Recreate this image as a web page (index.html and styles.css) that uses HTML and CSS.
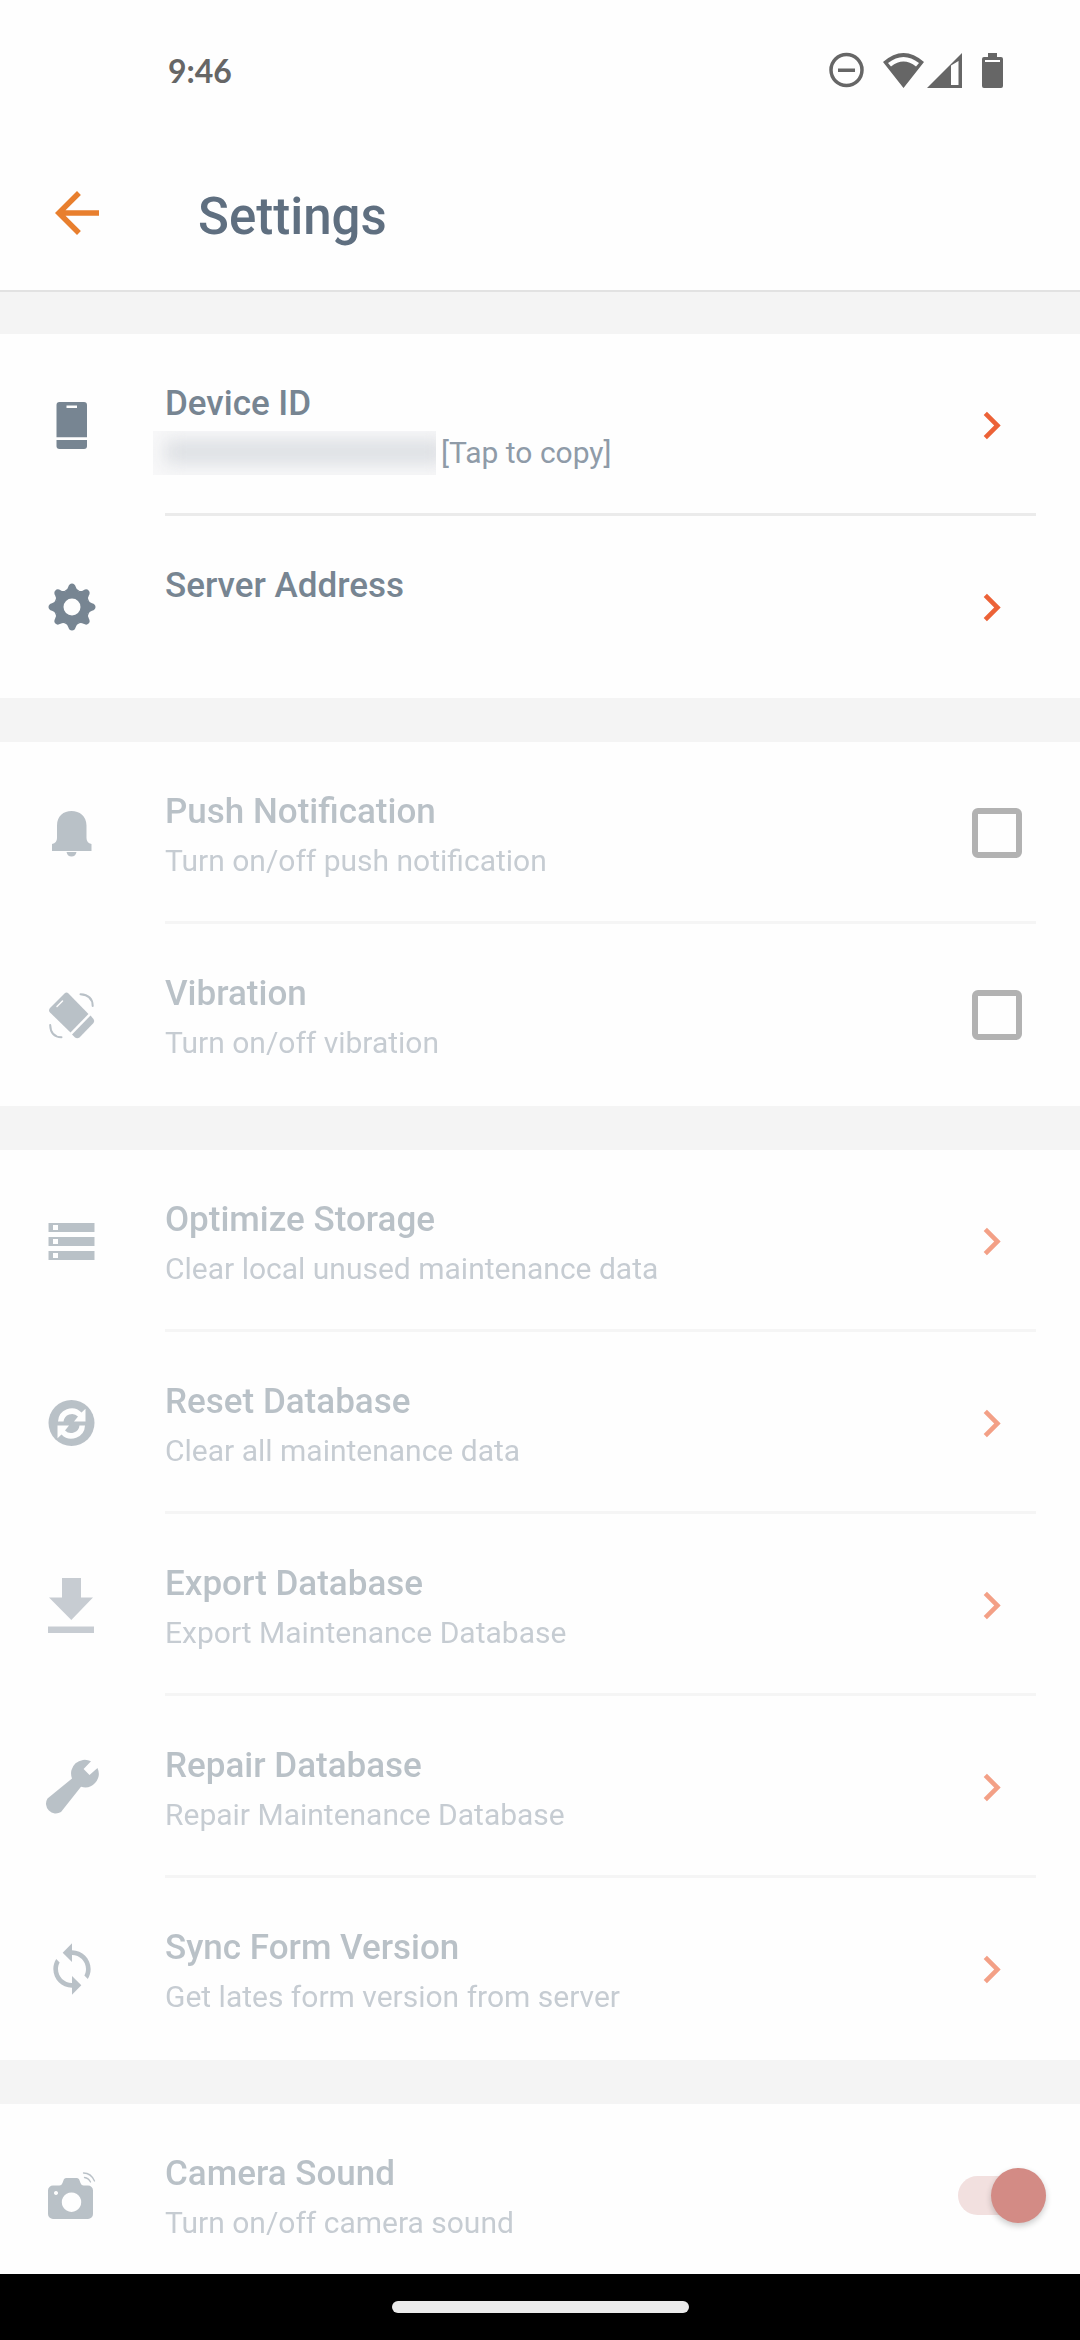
FILE: index.html
```
<!DOCTYPE html>
<html lang="en">
<head>
  <meta charset="UTF-8">
  <meta name="viewport" content="width=device-width, initial-scale=1.0">
  <title>Settings</title>
  <link rel="stylesheet" href="styles.css">
</head>
<body>
  <!-- shared chevron -->
  <svg class="defs" aria-hidden="true">
    <symbol id="chevron" viewBox="0 0 24 24"><path d="M10 6 8.590 7.410 13.170 12l-4.580 4.590L10 18l6-6z"/></symbol>
  </svg>

  <div class="status-bar">
    <span class="time">9:46</span>
    <svg class="status-icons" viewBox="0 0 176 36" aria-hidden="true">
      <circle cx="17.500" cy="18" r="15.500" fill="none" stroke="#666" stroke-width="3.500"/>
      <path d="M9 16.500h17v3.500H9z"/>
      <path fill-rule="evenodd" d="M54 10Q74.500-8 95 10L74.500 36zM59 11L62 14.500Q74.500 4.500 87 14.500L90 11Q74.500-1 59 11z"/>
      <path fill-rule="evenodd" d="M98 36L133 1V36zM122 13.500V33H129.500V9z" />
      <path fill-rule="evenodd" d="M159 1h9v4h4a2 2 0 0 1 2 2v27a2 2 0 0 1-2 2h-17a2 2 0 0 1-2-2V7a2 2 0 0 1 2-2h4zM156 8v2h15V8z"/>
    </svg>
  </div>

  <header class="app-bar">
    <button class="back" aria-label="Back">
      <svg viewBox="0 0 24 24"><path d="M20 11H7.830l5.590-5.590L12 4l-8 8 8 8 1.410-1.410L7.830 13H20v-2z"/></svg>
    </button>
    <h1>Settings</h1>
  </header>

  <main>
    <section class="group">
      <button class="row">
        <svg class="icon" viewBox="0 0 56 56">
          <path fill-rule="evenodd" d="M15.500 5h24.500a3 3 0 0 1 3 3v32.300H12.500V8a3 3 0 0 1 3-3zM22.500 8.500v2.500h10.500V8.500z"/>
          <path d="M12.500 43H43v6a3 3 0 0 1-3 3H15.500a3 3 0 0 1-3-3z"/>
        </svg>
        <span class="body">
          <span class="text">
            <span class="title">Device ID</span>
            <span class="desc"><span class="redacted"></span>[Tap to copy]</span>
          </span>
          <svg class="chevron"><use href="#chevron"/></svg>
        </span>
      </button>
      <button class="row">
        <svg class="icon" viewBox="0 0 56 56">
          <g transform="translate(28 28)">
            <path id="tooth" d="M-7-16.500Q-4.500-17-3.800-20Q-2.800-23.500 0-23.500Q2.800-23.500 3.800-20Q4.500-17 7-16.500L0 0z"/>
            <use href="#tooth" transform="rotate(45)"/>
            <use href="#tooth" transform="rotate(90)"/>
            <use href="#tooth" transform="rotate(135)"/>
            <use href="#tooth" transform="rotate(180)"/>
            <use href="#tooth" transform="rotate(225)"/>
            <use href="#tooth" transform="rotate(270)"/>
            <use href="#tooth" transform="rotate(315)"/>
            <circle r="12.500" fill="none" stroke="#778592" stroke-width="8"/>
            <circle r="8.500" fill="#fefefe"/>
          </g>
        </svg>
        <span class="body">
          <span class="text">
            <span class="title">Server Address</span>
            <span class="desc"></span>
          </span>
          <svg class="chevron"><use href="#chevron"/></svg>
        </span>
      </button>
    </section>

    <section class="group">
      <label class="row disabled">
        <svg class="icon" viewBox="0 0 56 56">
          <path d="M13 20.500C13 11 19.500 6 27.500 6S42.500 11 42.500 20.500V33q0 5 5 6v7H8v-7q5-1 5-6z"/>
          <path d="M22.500 47h10q-1 4.500-5 4.500t-5-4.500z"/>
        </svg>
        <span class="body">
          <span class="text">
            <span class="title">Push Notification</span>
            <span class="desc">Turn on/off push notification</span>
          </span>
          <input type="checkbox" class="check" disabled>
        </span>
      </label>
      <label class="row disabled">
        <svg class="icon" viewBox="0 0 56 56">
          <path d="M20.500 6.500Q22.500 4.500 24.500 6.500L44.500 27 26.500 45.500 6 25.500Q4 23.500 6 21z"/>
          <path d="M46.500 28.500L49.500 32Q51 34 49.500 36L35.500 50.500Q33 52 31 50.500L28 47.500z"/>
          <path d="M13 19.500L18.500 14" fill="none" stroke="#fefefe" stroke-width="1.500" stroke-linecap="round"/>
          <path d="M36.500 7.300Q48.500 8 48.700 19M6.200 38Q6.500 50 17.500 50.300" fill="none" stroke="#778592" stroke-width="2" stroke-linecap="round"/>
        </svg>
        <span class="body">
          <span class="text">
            <span class="title">Vibration</span>
            <span class="desc">Turn on/off vibration</span>
          </span>
          <input type="checkbox" class="check" disabled>
        </span>
      </label>
    </section>

    <section class="group">
      <button class="row disabled" disabled>
        <svg class="icon" viewBox="0 0 56 56">
          <path fill-rule="evenodd" d="M4.500 10h46v9h-46zM9 12v5h5v-5zM4.500 24h46v9h-46zM9 26v5h5v-5zM4.500 38h46v9h-46zM9 40v5h5v-5z"/>
        </svg>
        <span class="body">
          <span class="text">
            <span class="title">Optimize Storage</span>
            <span class="desc">Clear local unused maintenance data</span>
          </span>
          <svg class="chevron"><use href="#chevron"/></svg>
        </span>
      </button>
      <button class="row disabled" disabled>
        <svg class="icon" viewBox="0 0 56 56">
          <circle cx="27.500" cy="28" r="23"/>
          <path id="turn" fill="#fefefe" d="M14 26.500A13.700 13.700 0 0 1 37.500 17.500L41.500 13.700V26.500H30L34 21.500A8.500 8.500 0 0 0 19.500 26.500z"/>
          <use href="#turn" transform="rotate(180 27.500 28.500)"/>
        </svg>
        <span class="body">
          <span class="text">
            <span class="title">Reset Database</span>
            <span class="desc">Clear all maintenance data</span>
          </span>
          <svg class="chevron"><use href="#chevron"/></svg>
        </span>
      </button>
      <button class="row disabled" disabled>
        <svg class="icon light" viewBox="0 0 56 56">
          <path d="M18 1h19v19.500h12L27.300 43 5 20.500h13zM4 49.500h46v6.500H4z"/>
        </svg>
        <span class="body">
          <span class="text">
            <span class="title">Export Database</span>
            <span class="desc">Export Maintenance Database</span>
          </span>
          <svg class="chevron"><use href="#chevron"/></svg>
        </span>
      </button>
      <button class="row disabled" disabled>
        <svg class="icon" viewBox="0 0 56 56">
          <path d="M28 19.500L3.500 39.500A9.800 9.800 0 0 0 17 53L37 27.700A13.700 13.700 0 0 0 53.500 9L45.500 16 39.600 10 47 2.300A13.700 13.700 0 0 0 28 19.500z"/>
        </svg>
        <span class="body">
          <span class="text">
            <span class="title">Repair Database</span>
            <span class="desc">Repair Maintenance Database</span>
          </span>
          <svg class="chevron"><use href="#chevron"/></svg>
        </span>
      </button>
      <button class="row disabled" disabled>
        <svg class="icon" viewBox="0 0 24 24">
          <path d="M12 4V1L8 5l4 4V6c3.310 0 6 2.690 6 6 0 1.010-.25 1.970-.7 2.800l1.460 1.460C19.540 15.030 20 13.570 20 12c0-4.420-3.580-8-8-8zm0 14c-3.310 0-6-2.690-6-6 0-1.010.25-1.970.7-2.800L5.240 7.740C4.460 8.970 4 10.430 4 12c0 4.420 3.580 8 8 8v3l4-4-4-4v3z"/>
        </svg>
        <span class="body">
          <span class="text">
            <span class="title">Sync Form Version</span>
            <span class="desc">Get lates form version from server</span>
          </span>
          <svg class="chevron"><use href="#chevron"/></svg>
        </span>
      </button>
    </section>

    <section class="group">
      <label class="row disabled">
        <svg class="icon" viewBox="0 0 56 56">
          <path fill-rule="evenodd" d="M9 18.500h6.500q2 0 3-2.500l1.300-3.500Q20.500 11 22 11h11q1.500 0 2.200 1.500L36.500 16q1 2.500 3 2.500H44a5 5 0 0 1 5 5V47a5 5 0 0 1-5 5H9a5 5 0 0 1-5-5V23.500a5 5 0 0 1 5-5zM27.500 25.500a9.700 9.700 0 1 0 .01 0zM12 24a2 2 0 1 0 .01 0z"/>
          <path d="M39.500 6Q47 6 50.500 14M40.500 10.500Q44.500 11 46.500 15" fill="none" stroke="#778592" stroke-width="1.300" stroke-linecap="round"/>
        </svg>
        <span class="body">
          <span class="text">
            <span class="title">Camera Sound</span>
            <span class="desc">Turn on/off camera sound</span>
          </span>
          <input type="checkbox" class="switch" checked disabled>
        </span>
      </label>
    </section>
  </main>

  <div class="nav-bar"><span class="pill"></span></div>
</body>
</html>
```
FILE: styles.css
```
* { box-sizing: border-box; }
body {
  display: flex;
  flex-direction: column;
  height: 100vh;
  margin: 0;
  font-family: Roboto, sans-serif;
  background-color: #fefefe;
}
button {
  padding: 0;
  border: none;
  background: none;
  font: inherit;
  text-align: left;
}
svg { display: block; }
.defs { display: none; }

.status-bar {
  flex: none;
  display: flex;
  align-items: center;
  justify-content: space-between;
  height: 140px;
  padding: 0 75px 0 168px;
}
.time {
  font-family: Lato, sans-serif;
  font-size: 32px;
  font-weight: 700;
  color: #666;
}
.status-icons { width: 176px; height: 36px; fill: #666; }

.app-bar {
  flex: none;
  display: flex;
  align-items: center;
  gap: 88px;
  height: 152px;
  padding: 0 44px 4px;
  border-bottom: 2px solid #e2e2e2;
}
.back svg { width: 66px; height: 66px; fill: #e87f2e; }
h1 {
  margin: 0;
  padding-top: 6px;
  font-size: 51px;
  font-weight: 500;
  color: #5f6f80;
}

main {
  flex: 1;
  min-height: 0;
  display: flex;
  flex-direction: column;
  gap: 44px;
  padding-top: 42px;
  overflow-y: auto;
  scrollbar-width: none;
  background-color: #f4f4f4;
}
.group { background-color: #fefefe; }
.row {
  display: flex;
  align-items: center;
  gap: 65px;
  width: 100%;
  height: 182px;
  padding: 0 44px;
}
.icon { flex: none; width: 56px; height: 56px; fill: #778592; }
.icon.light { fill: #919ca8; }
.body {
  flex: 1;
  display: flex;
  align-items: center;
  justify-content: space-between;
  height: 182px;
  padding-right: 17px;
  border-top: 3px solid transparent;
  border-bottom: 3px solid #ebebeb;
}
.row:last-child .body { border-bottom-color: transparent; }
.text { padding-top: 6px; }
.title, .desc { display: block; height: 48px; line-height: 48px; }
.title {
  font-size: 35px;
  font-weight: 500;
  color: #778592;
}
.desc {
  display: flex;
  align-items: center;
  margin-top: 1px;
  font-size: 30px;
  color: #8f9ba8;
}
.chevron { width: 55px; height: 55px; fill: #ec6237; }

/* greyed out until a server address is set */
.disabled .icon, .disabled .text { opacity: 0.5; }
.disabled .chevron { opacity: 0.6; }
.disabled .body { border-bottom-color: #f5f5f5; }

.redacted {
  width: 283px;
  height: 44px;
  margin: 0 5px 0 -12px;
  overflow: hidden;
  background-color: #f8f8f9;
}
.redacted::before {
  content: "";
  display: block;
  height: 24px;
  margin: 9px -10px 0 12px;
  background-color: #dcdfe3;
  filter: blur(9px);
}

.check {
  appearance: none;
  width: 50px;
  height: 50px;
  margin: 0 -3px 0 0;
  border: 6px solid #b2b2b2;
  border-radius: 6px;
}
.switch {
  appearance: none;
  display: flex;
  align-items: center;
  justify-content: flex-end;
  width: 88px;
  height: 39px;
  margin: 0 -27px 0 0;
  border-radius: 20px;
  background-color: #f2e0df;
}
.switch::before {
  content: "";
  flex: none;
  width: 55px;
  height: 55px;
  border-radius: 50%;
  background-color: #d38b85;
  box-shadow: 0 3px 6px rgba(0, 0, 0, 0.2);
}

.nav-bar {
  flex: none;
  display: flex;
  align-items: center;
  justify-content: center;
  height: 66px;
  background-color: #000;
}
.pill {
  width: 297px;
  height: 12px;
  border-radius: 6px;
  background-color: #ebebeb;
}
```
